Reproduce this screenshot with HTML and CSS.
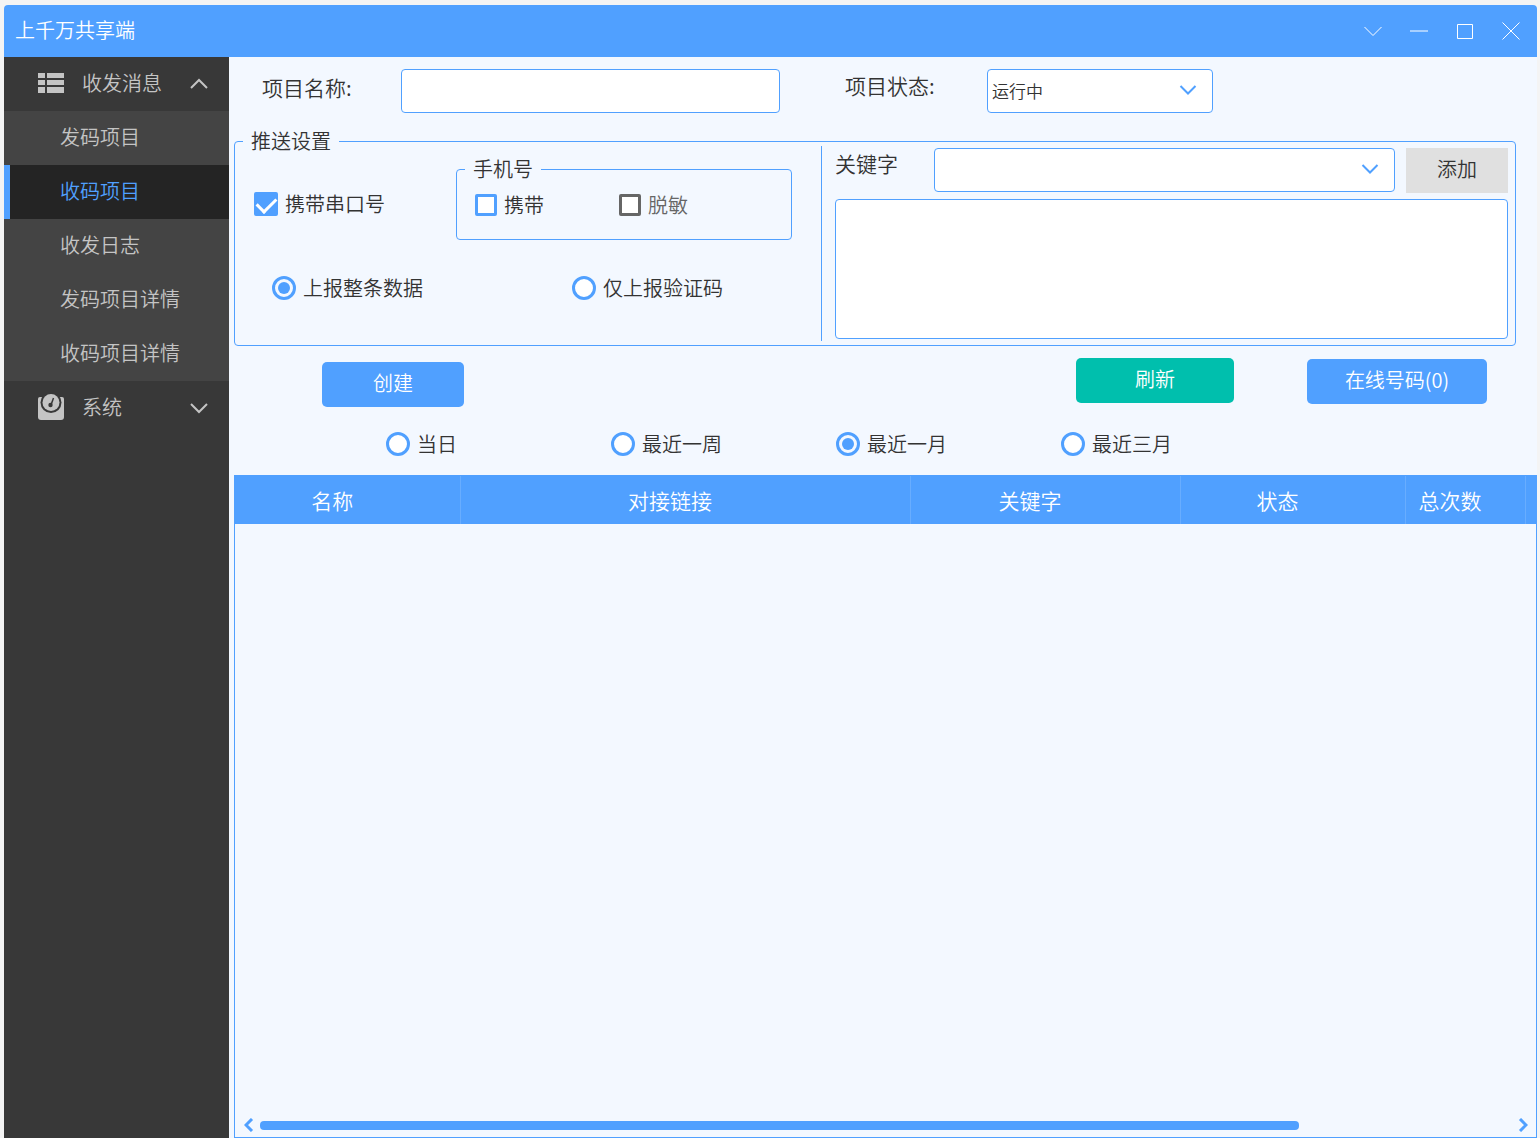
FILE: index.html
```html
<!DOCTYPE html>
<html lang="zh-CN">
<head>
<meta charset="utf-8">
<title>上千万共享端</title>
<link rel="stylesheet" href="styles.css">
</head>
<body>
<div class="window">
  <header class="titlebar">
    <h1 class="titlebar-name">上千万共享端</h1>
    <div class="titlebar-controls">
      <button class="win-btn" type="button" aria-label="菜单"><svg width="20" height="20" viewBox="0 0 20 20"><path d="M1.500 6l8.500 8.500L18.500 6"/></svg></button>
      <button class="win-btn" type="button" aria-label="最小化"><svg width="20" height="20" viewBox="0 0 20 20"><path d="M1 10h18"/></svg></button>
      <button class="win-btn" type="button" aria-label="最大化"><svg width="20" height="20" viewBox="0 0 20 20"><path d="M2.500 3.500h15v14h-15z"/></svg></button>
      <button class="win-btn" type="button" aria-label="关闭"><svg width="20" height="20" viewBox="0 0 20 20"><path d="M1.500 1.500l17 17M18.500 1.500l-17 17"/></svg></button>
    </div>
  </header>
  <div class="body">
    <nav class="sidebar">
      <button class="nav-group" type="button">
        <svg class="nav-icon" width="26" height="26" viewBox="0 0 26 26" fill="#c4c4c4"><path d="M0 3h7v5H0zM9 3h17v5H9zM0 10h7v5H0zM9 10h17v5H9zM0 17h7v6H0zM9 17h17v6H9z"/></svg>
        <span class="nav-label">收发消息</span>
        <svg class="nav-arrow" width="18" height="18" viewBox="0 0 18 18"><path d="M1 14l8-8 8 8"/></svg>
      </button>
      <a class="nav-item" href="#send">发码项目</a>
      <a class="nav-item active" href="#receive" aria-current="page">收码项目</a>
      <a class="nav-item" href="#log">收发日志</a>
      <a class="nav-item" href="#send-detail">发码项目详情</a>
      <a class="nav-item" href="#receive-detail">收码项目详情</a>
      <button class="nav-group" type="button">
        <svg class="nav-icon" width="26" height="26" viewBox="0 0 26 26"><path d="M0 5q0-2 2-2h22q2 0 2 2v18q0 3-3 3H3q-3 0-3-3z" fill="#c4c4c4"/><circle cx="13" cy="8.500" r="10.500" fill="#383838"/><circle cx="13" cy="8.500" r="8.500" fill="#c4c4c4"/><path d="M15.500 4l-2.500 7" stroke="#383838" stroke-width="1.500"/><circle cx="12.500" cy="11" r="2.200" fill="#383838"/></svg>
        <span class="nav-label">系统</span>
        <svg class="nav-arrow" width="18" height="18" viewBox="0 0 18 18"><path d="M1 6l8 8 8-8"/></svg>
      </button>
    </nav>
    <main class="content">
      <form class="project">
        <div class="top-row">
          <label class="field-label name-label" for="name">项目名称:</label>
          <input class="control name-input" id="name" type="text">
          <label class="field-label status-label" for="status">项目状态:</label>
          <span class="select-wrap status-select">
            <select class="control" id="status"><option>运行中</option></select>
            <svg class="select-arrow" width="18" height="12" viewBox="0 0 18 12"><path d="M1.500 2l7.500 7.500L16.500 2"/></svg>
          </span>
        </div>
        <fieldset class="group push">
          <legend>推送设置</legend>
          <div class="push-grid">
            <div class="push-left">
              <div class="push-row">
                <label class="choice"><input class="box big" type="checkbox" checked>携带串口号</label>
                <fieldset class="group phone">
                  <legend>手机号</legend>
                  <div class="phone-row">
                    <label class="choice"><input class="box" type="checkbox">携带</label>
                    <label class="choice muted"><input class="box" type="checkbox" disabled>脱敏</label>
                  </div>
                </fieldset>
              </div>
              <div class="report-row">
                <label class="choice"><input class="dot" type="radio" name="report" checked>上报整条数据</label>
                <label class="choice"><input class="dot" type="radio" name="report">仅上报验证码</label>
              </div>
            </div>
            <div class="push-right">
              <div class="keyword-row">
                <label class="field-label keyword-label" for="keyword">关键字</label>
                <span class="select-wrap keyword-select">
                  <select class="control" id="keyword"><option></option></select>
                  <svg class="select-arrow" width="18" height="12" viewBox="0 0 18 12"><path d="M1.500 2l7.500 7.500L16.500 2"/></svg>
                </span>
                <button class="add-btn" type="button">添加</button>
              </div>
              <textarea class="control keyword-list" aria-label="关键字列表"></textarea>
            </div>
          </div>
        </fieldset>
        <div class="actions">
          <button class="btn create" type="button">创建</button>
          <button class="btn refresh" type="button">刷新</button>
          <button class="btn online" type="button">在线号码(0)</button>
        </div>
        <div class="range-row">
          <label class="choice"><input class="dot" type="radio" name="range">当日</label>
          <label class="choice"><input class="dot" type="radio" name="range">最近一周</label>
          <label class="choice"><input class="dot" type="radio" name="range" checked>最近一月</label>
          <label class="choice"><input class="dot" type="radio" name="range">最近三月</label>
        </div>
      </form>
      <section class="grid">
        <table class="grid-table">
          <colgroup><col class="c-name"><col class="c-link"><col class="c-key"><col class="c-state"><col class="c-count"><col></colgroup>
          <thead><tr><th>名称</th><th>对接链接</th><th>关键字</th><th>状态</th><th>总次数</th><th></th></tr></thead>
        </table>
        <div class="scrollbar">
          <svg width="10" height="14" viewBox="0 0 10 14"><path d="M8 1L2 7l6 6"/></svg>
          <div class="track"><div class="thumb"></div></div>
          <svg width="10" height="14" viewBox="0 0 10 14"><path d="M2 1l6 6-6 6"/></svg>
        </div>
      </section>
    </main>
  </div>
</div>
</body>
</html>
```
FILE: styles.css
```css
* { box-sizing: border-box; }

body {
  margin: 0;
  padding: 5px 3px 0 4px;
  background: #f4f4f4;
  color: #333;
  font: 20px/26px "Noto Sans CJK SC", sans-serif;
  font-weight: 350;
}

button, input, select, textarea { font: inherit; color: inherit; margin: 0; }
button { border: 0; padding: 0; }

.window {
  display: flex;
  flex-direction: column;
  min-height: calc(100vh - 5px);
  border-radius: 4px 4px 0 0;
  overflow: hidden;
  background: #f3f8ff;
}

.titlebar {
  display: flex;
  justify-content: space-between;
  align-items: center;
  height: 52px;
  padding: 0 16px 0 11px;
  background: #50a0ff;
  color: #fff;
}
.titlebar-name { margin: 0; padding-bottom: 2px; font-size: 20px; font-weight: 350; }
.titlebar-controls { display: flex; gap: 26px; }
.win-btn { display: flex; background: none; }
.win-btn svg { fill: none; stroke: #fff; stroke-width: 1; }

.body { display: flex; flex: 1; }

.sidebar { flex: 0 0 225px; background: #383838; color: #c4c4c4; }
.nav-group {
  display: flex;
  align-items: center;
  width: 100%;
  height: 54px;
  padding: 0 21px 2px 34px;
  background: #383838;
}
.nav-label { flex: 1; padding-left: 18px; text-align: left; }
.nav-arrow { fill: none; stroke: #c4c4c4; stroke-width: 2; }
.nav-item {
  display: flex;
  align-items: center;
  height: 54px;
  padding: 0 0 2px 56px;
  background: #444;
  color: #c4c4c4;
  text-decoration: none;
}
.nav-item.active {
  padding-left: 50px;
  border-left: 6px solid #50a0ff;
  background: #242424;
  color: #50a0ff;
}

.content { display: flex; flex: 1; flex-direction: column; min-width: 0; padding-left: 5px; }

.control {
  height: 44px;
  border: 1px solid #50a0ff;
  border-radius: 4px;
  background: #fff;
  outline: 0;
}
.field-label { font-size: 21px; }
.top-row { display: flex; align-items: flex-start; height: 76px; padding: 12px 0 0 28px; }
.name-label { width: 139px; padding-top: 5px; }
.name-input { width: 379px; }
.status-label { width: 142px; margin-left: 65px; padding-top: 3px; }
.status-select { width: 226px; }

.select-wrap { position: relative; }
.select-wrap .control { display: block; width: 100%; padding-left: 4px; appearance: none; font-size: 17px; }
.select-arrow {
  position: absolute;
  top: 15px;
  right: 16px;
  fill: none;
  stroke: #50a0ff;
  stroke-width: 2;
  pointer-events: none;
}

.group { min-width: 0; margin: 0; padding: 0; border: 1px solid #50a0ff; border-radius: 4px; }
.group legend { height: 26px; margin-left: 8px; padding: 0 8px; }
.push { height: 218px; margin: -5px 21px 0 0; }
.push-grid { display: grid; grid-template-columns: 587px 1fr; margin-top: -8px; }
.push-left { height: 195px; border-right: 1px solid #50a0ff; }
.push-row { display: flex; align-items: flex-start; }
.push-row > .choice { flex: 0 0 221px; padding: 45px 0 0 19px; }
.phone { width: 336px; height: 84px; margin-top: 10px; }
.phone-row { display: flex; gap: 75px; padding: 10px 0 0 18px; }

.choice { display: flex; align-items: center; gap: 7px; white-space: nowrap; }
.muted { color: #666; }
.box, .dot { flex: none; appearance: none; border: 3px solid #50a0ff; background: #fff; }
.box { width: 22px; height: 22px; border-radius: 2px; }
.box.big { width: 24px; height: 24px; }
.box:checked { background: #50a0ff; }
.box:checked::before {
  content: "";
  display: block;
  width: 16px;
  height: 9px;
  margin-top: 2px;
  border: solid #fff;
  border-width: 0 0 3px 3px;
  transform: rotate(-45deg);
}
.box:disabled { border-color: #666; }
.dot { width: 24px; height: 24px; border-radius: 50%; }
.dot:checked { padding: 3px; background: #50a0ff content-box; }

.report-row { display: grid; grid-template-columns: 300px 1fr; padding: 35px 0 0 37px; }

.push-right { padding: 2px 7px 0 13px; }
.keyword-row { display: flex; }
.keyword-label { width: 99px; padding-top: 2px; }
.keyword-select { flex: 1; }
.add-btn { width: 102px; margin-left: 11px; padding-bottom: 3px; height: 45px; background: #e0e0e0; }
.keyword-list { display: block; width: 100%; height: 140px; margin-top: 6px; resize: none; }

.actions { display: flex; padding: 12px 50px 0 88px; }
.btn { height: 45px; padding-bottom: 3px; border-radius: 5px; background: #50a0ff; color: #fff; }
.create { width: 142px; margin-top: 4px; }
.refresh { width: 158px; margin-left: auto; background: #00bfad; }
.online { width: 180px; margin: 1px 0 0 73px; }

.range-row { display: grid; grid-template-columns: repeat(4, 225px); padding: 24px 0 18px 152px; }

.grid { display: flex; flex: 1; flex-direction: column; border: 1px solid #50a0ff; }
.grid-table { width: 100%; border-collapse: collapse; table-layout: fixed; background: #50a0ff; color: #fff; }
.grid-table th { height: 48px; padding: 0 30px 0 0; border-right: 1px solid #68adff; font-size: 21px; font-weight: 350; }
.grid-table th:last-child { padding: 0; border-right: 0; }
.c-name { width: 225px; }
.c-link { width: 450px; }
.c-key { width: 270px; }
.c-state { width: 225px; }
.c-count { width: 120px; }

.scrollbar { display: flex; align-items: center; margin-top: auto; padding: 0 8px 5px 9px; }
.scrollbar svg { fill: none; stroke: #50a0ff; stroke-width: 3; }
.track { flex: 1; padding: 0 6px; }
.thumb { width: 83%; height: 9px; border-radius: 4px; background: #50a0ff; }
```
